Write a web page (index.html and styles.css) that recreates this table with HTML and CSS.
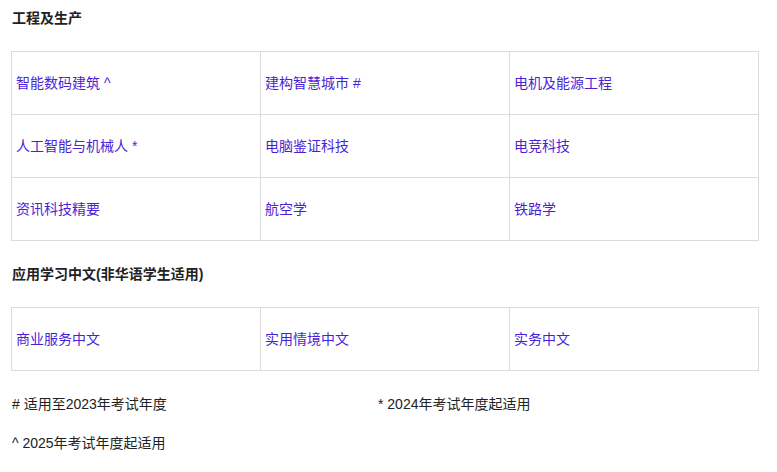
FILE: index.html
```html
<!DOCTYPE html>
<html lang="zh">
<head>
<meta charset="utf-8">
<link rel="stylesheet" href="styles.css">
</head>
<body>
<div class="page">
  <h3 class="heading">工程及生产</h3>
  <div class="grid">
    <a class="cell">智能数码建筑 ^</a>
    <a class="cell">建构智慧城市 #</a>
    <a class="cell">电机及能源工程</a>
    <a class="cell">人工智能与机械人 *</a>
    <a class="cell">电脑鉴证科技</a>
    <a class="cell">电竞科技</a>
    <a class="cell">资讯科技精要</a>
    <a class="cell">航空学</a>
    <a class="cell">铁路学</a>
  </div>
  <h3 class="heading second">应用学习中文(非华语学生适用)</h3>
  <div class="grid">
    <a class="cell">商业服务中文</a>
    <a class="cell">实用情境中文</a>
    <a class="cell">实务中文</a>
  </div>
  <div class="notes">
    <p class="note"># 适用至2023年考试年度</p>
    <p class="note">* 2024年考试年度起适用</p>
    <p class="note">^ 2025年考试年度起适用</p>
  </div>
</div>
</body>
</html>
```
FILE: styles.css
```css
html, body {
  margin: 0;
  padding: 0;
  background: #fff;
}
body {
  font-family: "Liberation Sans", "Noto Sans CJK SC", sans-serif;
  font-size: 14px;
  color: #222;
}
.page {
  padding: 9px 18px 0 11px;
}
.heading {
  margin: 0;
  padding-left: 1px;
  font-size: 14px;
  font-weight: bold;
  line-height: 18px;
  color: #222;
}
.heading.second {
  margin-top: 24px;
}
.grid {
  margin-top: 24px;
  display: grid;
  grid-template-columns: repeat(3, 1fr);
  border-top: 1px solid #dcdcdc;
  border-left: 1px solid #dcdcdc;
}
.cell {
  display: flex;
  align-items: center;
  height: 62px;
  padding: 0 4px;
  border-right: 1px solid #dcdcdc;
  border-bottom: 1px solid #dcdcdc;
  color: #4b1fd6;
  text-decoration: none;
  line-height: 18px;
}
.notes {
  margin-top: 24px;
  display: grid;
  grid-template-columns: 366px 1fr;
  row-gap: 21px;
  padding-left: 1px;
}
.note {
  margin: 0;
  line-height: 18px;
  color: #222;
}
```
